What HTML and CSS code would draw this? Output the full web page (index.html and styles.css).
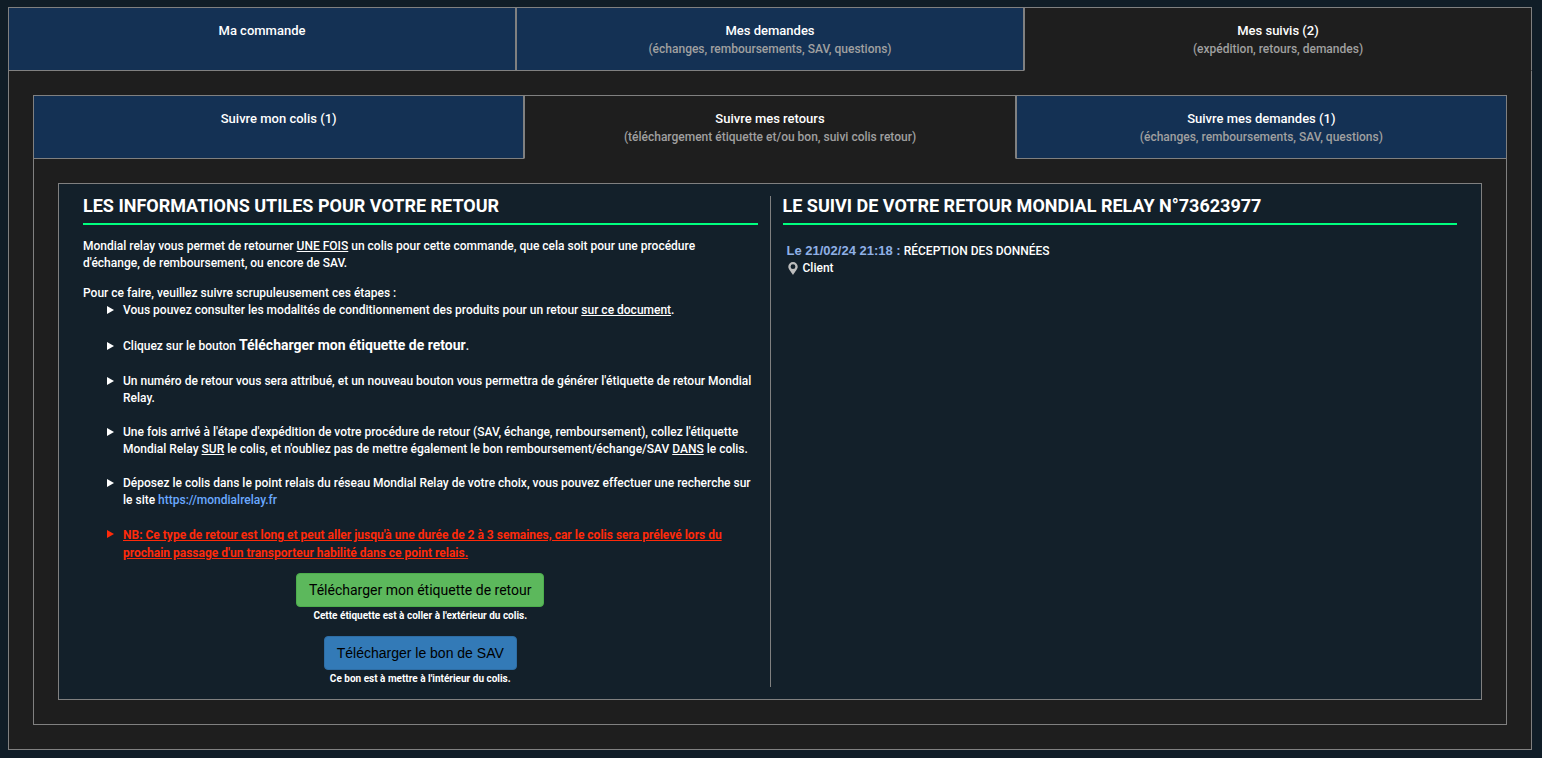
FILE: index.html
```html
<!DOCTYPE html>
<html lang="fr">
<head>
<meta charset="utf-8">
<meta name="viewport" content="width=device-width, initial-scale=1">
<title>Mes suivis</title>
<link rel="stylesheet" href="styles.css">
</head>
<body>
<main class="frame">
  <div class="tabs" role="tablist">
    <button class="tab" role="tab">Ma commande</button>
    <button class="tab" role="tab">Mes demandes<span class="tab-note">(échanges, remboursements, SAV, questions)</span></button>
    <button class="tab active" role="tab" aria-selected="true">Mes suivis (2)<span class="tab-note">(expédition, retours, demandes)</span></button>
  </div>
  <div class="content">
    <div class="tabs" role="tablist">
      <button class="tab" role="tab">Suivre mon colis (1)</button>
      <button class="tab active" role="tab" aria-selected="true">Suivre mes retours<span class="tab-note">(téléchargement étiquette et/ou bon, suivi colis retour)</span></button>
      <button class="tab" role="tab">Suivre mes demandes (1)<span class="tab-note">(échanges, remboursements, SAV, questions)</span></button>
    </div>
    <div class="content">
      <div class="panel">
        <section class="column">
          <h2 class="title">LES INFORMATIONS UTILES POUR VOTRE RETOUR</h2>
          <p class="text">Mondial relay vous permet de retourner <u>UNE FOIS</u> un colis pour cette commande, que cela soit pour une procédure d'échange, de remboursement, ou encore de SAV.</p>
          <p class="text">Pour ce faire, veuillez suivre scrupuleusement ces étapes :</p>
          <ul class="steps">
            <li class="step">Vous pouvez consulter les modalités de conditionnement des produits pour un retour <a class="doc-link" href="#">sur ce document</a>.</li>
            <li class="step step-action">Cliquez sur le bouton <strong class="action">Télécharger mon étiquette de retour</strong>.</li>
            <li class="step">Un numéro de retour vous sera attribué, et un nouveau bouton vous permettra de générer l'étiquette de retour Mondial Relay.</li>
            <li class="step">Une fois arrivé à l'étape d'expédition de votre procédure de retour (SAV, échange, remboursement), collez l'étiquette Mondial Relay <u>SUR</u> le colis, et n'oubliez pas de mettre également le bon remboursement/échange/SAV <u>DANS</u> le colis.</li>
            <li class="step">Déposez le colis dans le point relais du réseau Mondial Relay de votre choix, vous pouvez effectuer une recherche sur le site <a class="site-link" href="#">https://mondialrelay.fr</a></li>
            <li class="step warning"><u>NB: Ce type de retour est long et peut aller jusqu'à une durée de 2 à 3 semaines, car le colis sera prélevé lors du prochain passage d'un transporteur habilité dans ce point relais.</u></li>
          </ul>
          <div class="downloads">
            <div class="download">
              <button class="btn btn-green">Télécharger mon étiquette de retour</button>
              <p class="caption">Cette étiquette est à coller à l'extérieur du colis.</p>
            </div>
            <div class="download">
              <button class="btn btn-blue">Télécharger le bon de SAV</button>
              <p class="caption">Ce bon est à mettre à l'intérieur du colis.</p>
            </div>
          </div>
        </section>
        <div class="divider"></div>
        <section class="column">
          <h2 class="title">LE SUIVI DE VOTRE RETOUR MONDIAL RELAY N°73623977</h2>
          <div class="tracking">
            <p><strong class="date">Le 21/02/24 21:18 :</strong> RÉCEPTION DES DONNÉES</p>
            <p class="place"><svg class="pin" viewBox="0 0 10 13" aria-hidden="true"><path fill="#bdbdbd" fill-rule="evenodd" d="M5 0a4.700 4.700 0 0 1 4.700 4.700C9.700 7.200 7 9.500 5 13 3 9.500.3 7.200.3 4.700A4.700 4.700 0 0 1 5 0zm0 2.300a2.400 2.400 0 1 0 0 4.800 2.400 2.400 0 0 0 0-4.800z"/></svg>Client</p>
          </div>
        </section>
      </div>
    </div>
  </div>
</main>
</body>
</html>
```
FILE: styles.css
```css
* {
  box-sizing: border-box;
}

body {
  margin: 0;
  padding: 7px 10px 8px 8px;
  background: #101d27;
  color: #fff;
  font: 500 12px/17px Roboto, "Liberation Sans", sans-serif;
}

h2, p, ul {
  margin: 0;
  padding: 0;
}

.tabs {
  display: grid;
  grid-template-columns: repeat(3, 1fr);
}

.tab {
  display: flex;
  flex-direction: column;
  align-items: center;
  min-height: 64px;
  padding: 14px 8px 12px;
  border: 1px solid #808080;
  border-radius: 0;
  background: #143154;
  color: #fff;
  font: 500 13px/18px Roboto, sans-serif;
  cursor: pointer;
}

.tab.active {
  background: #1e1e1e;
  border-bottom-color: #1e1e1e;
}

.tab-note {
  color: #a0a0a0;
  font-size: 12px;
}

.content {
  padding: 24px;
  border: 1px solid #808080;
  border-top: 0;
  background: #1e1e1e;
}

.panel {
  display: grid;
  grid-template-columns: 1fr 1px 1fr;
  column-gap: 12px;
  padding: 12px 24px;
  border: 1px solid #808080;
  background: #13202a;
}

.divider {
  background: #808080;
}

.title {
  margin-bottom: 13px;
  padding-bottom: 7px;
  border-bottom: 2px solid #00ff7f;
  font-size: 18px;
  font-weight: 700;
  line-height: 20px;
}

.text {
  padding-right: 8px;
}

.text + .text {
  margin-top: 13px;
}

.steps {
  display: grid;
  gap: 17px;
  padding-left: 40px;
  list-style: none;
}

.step::before {
  content: "";
  float: left;
  width: 7px;
  height: 8px;
  margin: 4px 0 0 -16px;
  background: currentColor;
  clip-path: polygon(0 0, 100% 50%, 0 100%);
}

.step-action {
  line-height: 19px;
}

.step-action::before {
  margin-top: 6px;
}

.action {
  font-size: 14px;
  font-weight: 700;
}

.doc-link {
  color: inherit;
}

.site-link {
  color: #6aa9ff;
  text-decoration: none;
}

.warning {
  color: #ff2a0a;
  font-weight: 700;
  line-height: 18px;
}

.downloads {
  display: grid;
  gap: 12px;
  margin-top: 11px;
  text-align: center;
}

.btn {
  height: 34px;
  padding: 0 12px;
  border: 1px solid;
  border-radius: 4px;
  color: #000;
  font: 400 14px/20px Roboto, sans-serif;
  vertical-align: top;
  cursor: pointer;
}

.btn-green {
  background: #5cb85c;
  border-color: #4cae4c;
}

.btn-blue {
  background: #337ab7;
  border-color: #2e6da4;
  font-family: "Liberation Sans", Arial, sans-serif;
}

.caption {
  padding-top: 1px;
  font-size: 10px;
  font-weight: 700;
  line-height: 16px;
}

.tracking {
  padding: 4px;
}

.date {
  color: #8fb0e6;
  font-family: "Liberation Sans", Arial, sans-serif;
  font-size: 13px;
  font-weight: 700;
}

.place {
  display: flex;
  align-items: center;
  gap: 5px;
  padding-left: 1px;
}

.pin {
  width: 10px;
  height: 13px;
}
```
